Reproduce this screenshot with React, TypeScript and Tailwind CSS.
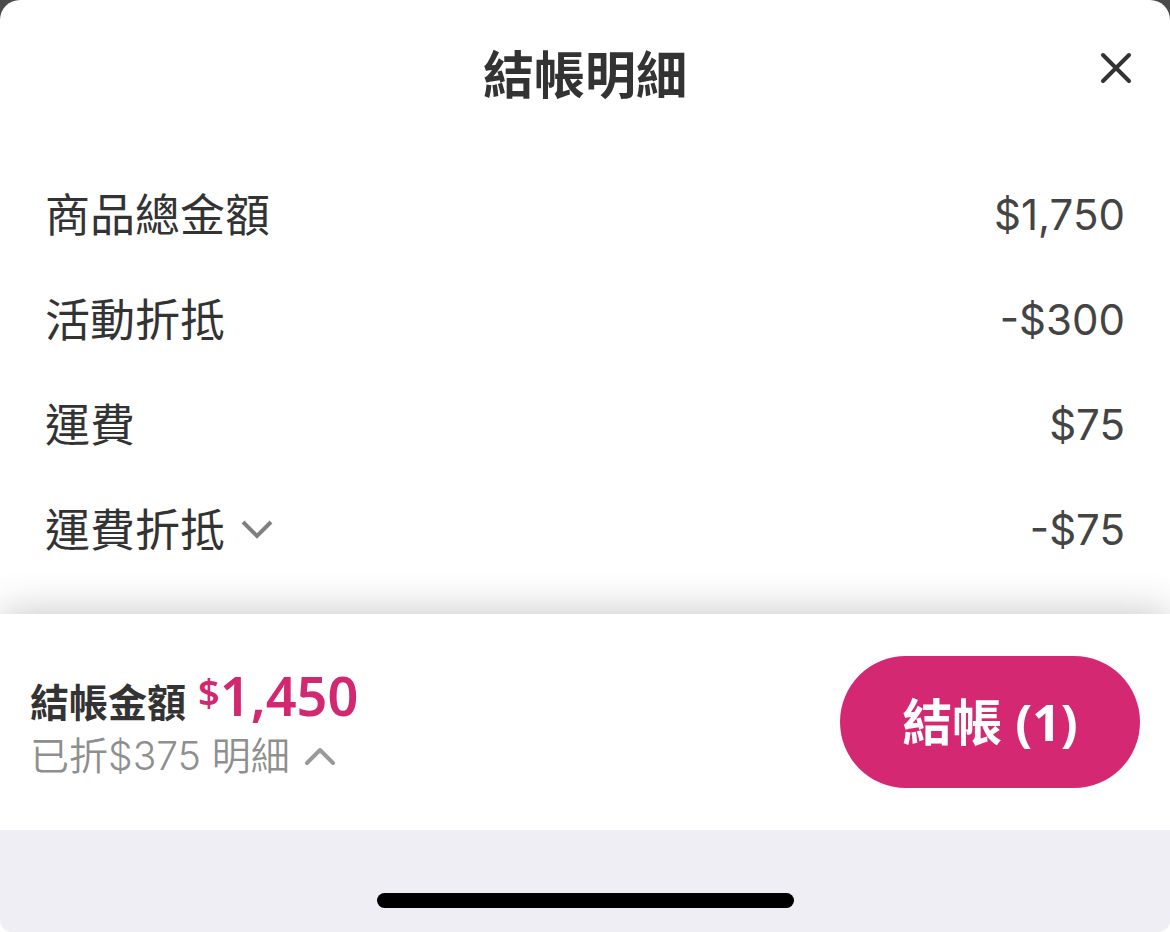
type IconProps = { className?: string };

function CloseIcon({ className }: IconProps) {
  return (
    <svg viewBox="0 0 48 48" fill="none" stroke="currentColor" strokeWidth="4" strokeLinecap="round" className={className} aria-hidden="true">
      <path d="M11 11 37 37M37 11 11 37" />
    </svg>
  );
}

function ChevronDownIcon({ className }: IconProps) {
  return (
    <svg viewBox="0 0 32 32" fill="none" stroke="currentColor" strokeWidth="4" className={className} aria-hidden="true">
      <path d="M2 10 16 24 30 10" />
    </svg>
  );
}

function ChevronUpIcon({ className }: IconProps) {
  return (
    <svg viewBox="0 0 32 32" fill="none" stroke="currentColor" strokeWidth="4" strokeLinecap="round" strokeLinejoin="round" className={className} aria-hidden="true">
      <path d="M3 23 16 10 29 23" />
    </svg>
  );
}

const rows = [
  { label: "商品總金額", amount: "$1,750" },
  { label: "活動折抵", amount: "-$300" },
  { label: "運費", amount: "$75" },
  { label: "運費折抵", amount: "-$75", expandable: true },
];

export default function App() {
  return (
    <div className="flex min-h-screen flex-col bg-white font-['Noto_Sans','Noto_Sans_CJK_TC',sans-serif] text-[#333]">
      <div className="bg-[#4a4a4a]">
        <header className="grid h-[160px] grid-cols-[1fr_auto_1fr] items-start rounded-t-[20px] bg-white px-[30px]">
          <h1 className="col-start-2 mt-[42px] text-[51px] leading-[64px] font-bold">結帳明細</h1>
          <button type="button" aria-label="關閉" className="mt-[44px] justify-self-end">
            <CloseIcon className="size-12" />
          </button>
        </header>
      </div>
      <dl className="flex flex-1 flex-col px-[45px] text-[45px] leading-[106px]">
        {rows.map((row) => (
          <div key={row.label} className="flex h-[105px] justify-between">
            <dt className="font-['Noto_Sans_CJK_TC',sans-serif]">
              {row.expandable ? (
                <button type="button" className="flex items-center gap-4">
                  {row.label}
                  <ChevronDownIcon className="size-8 text-[#808080]" />
                </button>
              ) : (
                row.label
              )}
            </dt>
            <dd className="font-['Inter','Noto_Sans_CJK_TC',sans-serif] text-[42px] leading-[110px] text-[#444]">{row.amount}</dd>
          </div>
        ))}
      </dl>
      <footer className="flex h-[216px] items-center justify-between bg-white px-[30px] shadow-[0_0_40px_rgba(0,0,0,0.24)]">
        <div className="flex flex-col pt-2">
          <p className="flex h-[60px] items-start gap-3 font-bold">
            <span className="pt-1 text-[39px] leading-[66px]">結帳金額</span>
            <span className="flex items-start font-semibold text-[#d22870]">
              <span className="text-[38px] leading-[54px]">$</span>
              <span className="text-[54px] leading-[60px]">1,450</span>
            </span>
          </p>
          <button type="button" className="flex items-center gap-3.5 font-['Inter','Noto_Sans_CJK_TC',sans-serif] text-[39px] leading-[62px] font-[350] text-[#8f8f8f]">
            已折$375 明細
            <ChevronUpIcon className="size-8 text-[#999]" />
          </button>
        </div>
        <button type="button" className="h-[132px] w-[300px] rounded-full bg-[#d42972] text-[50px] font-bold text-white">
          結帳 (1)
        </button>
      </footer>
      <div className="flex h-[102px] items-end justify-center rounded-b-[12px] bg-[#efeef5] pb-6">
        <div className="h-[15px] w-[417px] rounded-full bg-black" />
      </div>
    </div>
  );
}
